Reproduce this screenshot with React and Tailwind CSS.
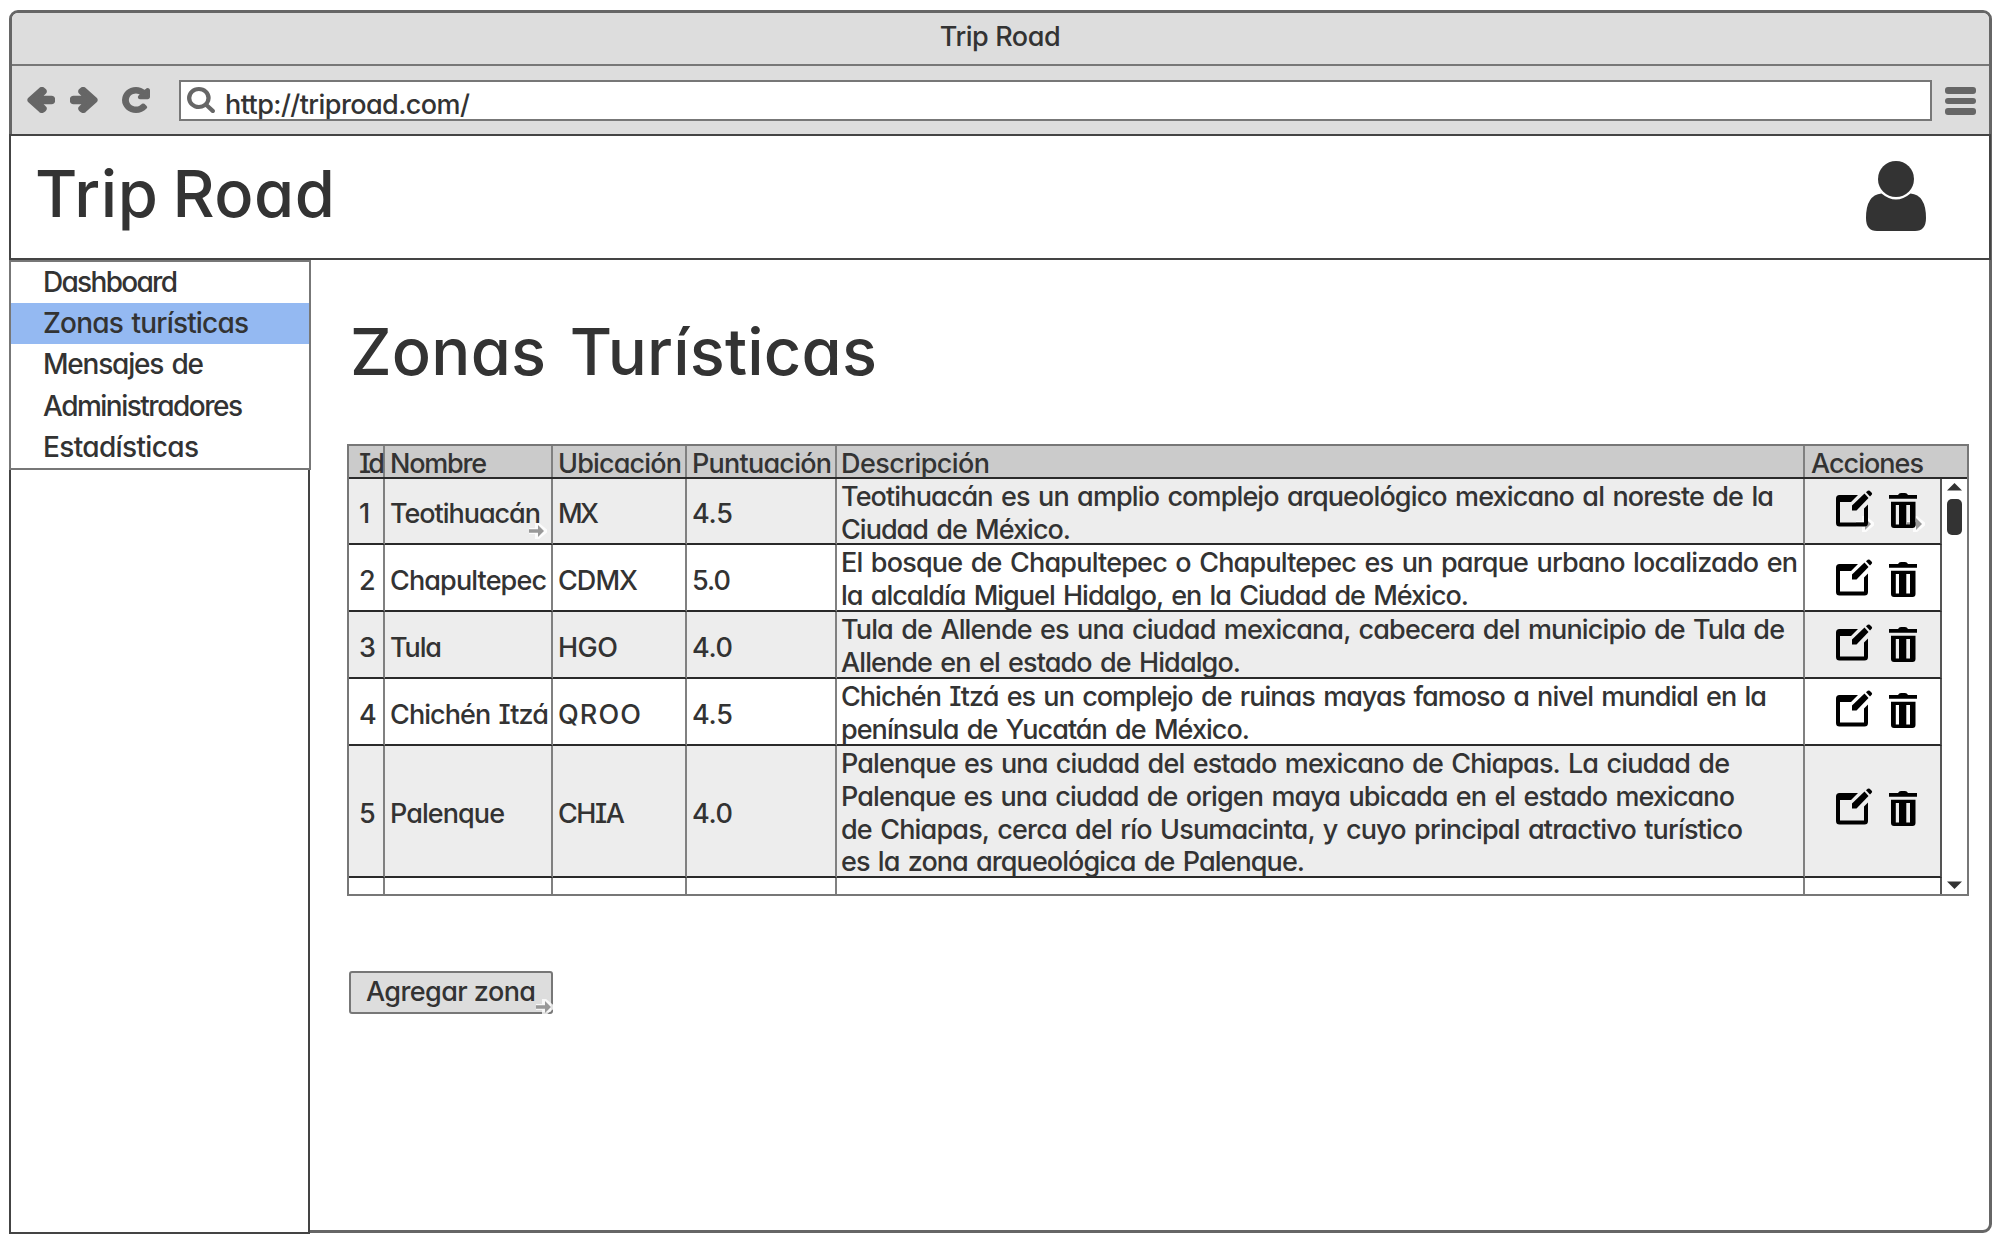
import { useLayoutEffect, useRef } from 'react';

// One line of text whose tracking is adjusted so that it spans `w` pixels.
function Fit({ w, children, className = '' }) {
  const ref = useRef(null);
  useLayoutEffect(() => {
    const el = ref.current;
    el.style.letterSpacing = '0px';
    const natural = el.getBoundingClientRect().width;
    const n = Math.max(1, el.textContent.length - 1);
    el.style.letterSpacing = `${(w + 3 - natural) / n}px`;
  }, [w, children]);
  return (
    <span className={`block whitespace-nowrap -ml-[2px] ${className}`}>
      <span ref={ref} className="inline-block">{children}</span>
    </span>
  );
}

const ARROW =
  'M1664 896v128q0 53-32.5 90.5t-84.5 37.5h-704l293 294q38 36 38 90t-38 90l-75 76q-37 37-90 37-52 0-91-37l-651-652q-37-37-37-90 0-52 37-91l651-650q38-38 91-38 52 0 90 38l75 74q38 38 38 91t-38 91l-293 293h704q52 0 84.5 37.5t32.500 90.5z';

function LinkArrow({ className }) {
  return (
    <svg className={`absolute ${className}`} width="20" height="16" viewBox="0 0 20 16">
      <path d="M2 8h9M11 3l6 5-6 5z" stroke="#fff" strokeOpacity="0.8" strokeWidth="6" fill="#fff" />
      <path d="M2 8h10" stroke="#999" strokeWidth="3.500" />
      <path d="M11 2l6 6-6 6z" fill="#999" />
    </svg>
  );
}

function EditIcon() {
  return (
    <svg width="37" height="39" viewBox="0 0 37 39" className="block">
      <path d="M4 5h18l-7 7h-11v20.500h24v-14l4-4v18.500a3.500 3.500 0 0 1-3.500 3.500h-25a3.500 3.500 0 0 1-3.500-3.500v-24.500a3.500 3.500 0 0 1 3.500-3.500z" />
      <path d="M16 15.500L28.500 3.500l4 4.500L20.500 20.500H16z" />
      <path d="M30 2.300l1.700-1.500q1-.8 2 0l2 2q.9 1 0 2L34 6.600z" />
    </svg>
  );
}

function TrashIcon() {
  return (
    <svg width="28" height="36" viewBox="0 0 28 36" className="block">
      <path d="M0 2h9q1-2 3-2h4q2 0 3 2h9v3.700H0z" />
      <path fillRule="evenodd" d="M2 8.700h24.500v23.300a3 3 0 0 1-3 3h-18.500a3 3 0 0 1-3-3zM6.800 12v19.500h3.200V12zM17.300 12v19.500h3.700V12z" />
    </svg>
  );
}

const MENU = [
  ['Dashboard', 132],
  ['Zonas turísticas', 203],
  ['Mensajes de', 158],
  ['Administradores', 197],
  ['Estadísticas', 153],
];

const ROWS = [
  { id: '1', name: ['Teotihuacán', 148], loc: ['MX', 38], score: ['4.5', 38], h: 'h-[66px]', pad: 'pt-[11px]', link: true,
    desc: [['Teotihuacán es un amplio complejo arqueológico mexicano al noreste de la', 930], ['Ciudad de México.', 227]] },
  { id: '2', name: ['Chapultepec', 154], loc: ['CDMX', 77], score: ['5.0', 36], h: 'h-[67px]', pad: 'pt-[14px]',
    desc: [['El bosque de Chapultepec o Chapultepec es un parque urbano localizado en', 954], ['la alcaldía Miguel Hidalgo, en la Ciudad de México.', 625]] },
  { id: '3', name: ['Tula', 49], loc: ['HGO', 57], score: ['4.0', 38], h: 'h-[67px]', pad: 'pt-[12px]',
    desc: [['Tula de Allende es una ciudad mexicana, cabecera del municipio de Tula de', 941], ['Allende en el estado de Hidalgo.', 397]] },
  { id: '4', name: ['Chichén Itzá', 156], loc: ['QROO', 80], score: ['4.5', 38], h: 'h-[67px]', pad: 'pt-[11px]',
    desc: [['Chichén Itzá es un complejo de ruinas mayas famoso a nivel mundial en la', 923], ['península de Yucatán de México.', 406]] },
  { id: '5', name: ['Palenque', 112], loc: ['CHIA', 64], score: ['4.0', 38], h: 'h-[132px]', pad: 'pt-[42px]',
    desc: [['Palenque es una ciudad del estado mexicano de Chiapas. La ciudad de', 886], ['Palenque es una ciudad de origen maya ubicada en el estado mexicano', 891], ['de Chiapas, cerca del río Usumacinta, y cuyo principal atractivo turístico', 899], ['es la zona arqueológica de Palenque.', 461]] },
];

const CELL = 'border-r-2 border-[#808080] flex items-center shrink-0';
const BODY_CELL = 'border-b-2 border-b-[#2a2a2a] pt-[5px]';

function Row({ r, i }) {
  return (
    <div className={`flex ${r.h} ${i % 2 === 0 ? 'bg-[#ededed]' : 'bg-white'}`}>
      <div className={`${CELL} ${BODY_CELL} w-[36px] pl-[10px]`}>{r.id}</div>
      <div className={`${CELL} ${BODY_CELL} relative w-[168px] pl-[7px]`}>
        <Fit w={r.name[1]}>{r.name[0]}</Fit>
        {r.link && <LinkArrow className="left-[142px] top-[44px]" />}
      </div>
      <div className={`${CELL} ${BODY_CELL} w-[134px] pl-[7px]`}><Fit w={r.loc[1]}>{r.loc[0]}</Fit></div>
      <div className={`${CELL} ${BODY_CELL} w-[150px] pl-[7px]`}><Fit w={r.score[1]}>{r.score[0]}</Fit></div>
      <div className={`${CELL} ${BODY_CELL} w-[968px] pl-[6px]`}>
        <div className="leading-[32.8px]">
          {r.desc.map(([t, w]) => <Fit key={t} w={w}>{t}</Fit>)}
        </div>
      </div>
      <div className={`relative w-[137px] shrink-0 flex items-start border-r-2 border-r-[#555] border-b-2 border-b-[#2a2a2a] pl-[31px] ${r.pad}`}>
        {r.link && <LinkArrow className="left-[49px] top-[37px]" />}
        {r.link && <LinkArrow className="left-[100px] top-[37px]" />}
        <div className="relative"><EditIcon /></div>
        <div className="relative ml-[16px] mt-[3px]"><TrashIcon /></div>
      </div>
    </div>
  );
}

export default function App() {
  return (
    <div className="w-[2004px] h-[1248px] bg-white overflow-hidden pl-[9px] pt-[10px] text-[27px] font-medium text-[#333] font-['Inter',sans-serif] [font-feature-settings:'cv11','cv08'] [word-spacing:2px] leading-[33px]">
      <div className="w-[1983px] h-[1223px] border-[3px] border-[#666] rounded-[9px] flex flex-col">
        <div className="shrink-0 h-[53px] bg-[#ddd] border-b-2 border-[#777] rounded-t-[6px] flex justify-center pl-[1px] pt-[7px] [word-spacing:0px]">
          <Fit w={118}>Trip Road</Fit>
        </div>
        <div className="shrink-0 h-[68px] bg-[#ddd] flex items-start pt-[14px] pl-[15px]">
          <svg className="mt-[7px]" width="28" height="26" viewBox="81 91 1673 1738" preserveAspectRatio="none"><path fill="#666" stroke="#666" strokeWidth="190" strokeLinejoin="round" d={ARROW} /></svg>
          <svg className="mt-[7px] ml-[15px] -scale-x-100" width="28" height="26" viewBox="81 91 1673 1738" preserveAspectRatio="none"><path fill="#666" stroke="#666" strokeWidth="190" strokeLinejoin="round" d={ARROW} /></svg>
          <svg className="mt-[7px] ml-[24px]" width="28" height="26" viewBox="-80 48 1696 1696" preserveAspectRatio="none">
            <path fill="#666" stroke="#666" strokeWidth="160" d="M1536 256v448q0 26-19 45t-45 19h-448q-42 0-59-40-17-39 14-69l138-138q-148-137-349-137-104 0-198.500 40.500t-163.500 109.500-109.500 163.500-40.500 198.500 40.500 198.500 109.500 163.500 163.500 109.500 198.500 40.500q119 0 225-52t179-147q7-10 23-12 14 0 25 9l137 138q9 8 9.500 20.500t-7.500 22.500q-109 132-264 204.500t-327 72.500q-156 0-298-61t-245-164-164-245-61-298 61-298 164-245 245-164 298-61q147 0 284.500 55.500t244.500 156.500l130-129q29-31 70-14 39 17 39 59z" />
          </svg>
          <div className="ml-[29px] w-[1753px] h-[41px] bg-white border-2 border-[#777] flex">
            <svg className="mt-[5px] ml-[6px]" width="28" height="26" viewBox="64 128 1664 1664" preserveAspectRatio="none">
              <path fill="#666" d="M1216 832q0-185-131.500-316.500t-316.500-131.500-316.500 131.500-131.500 316.500 131.500 316.500 316.500 131.500 316.500-131.500 131.500-316.500zm512 832q0 52-38 90t-90 38q-54 0-90-38l-343-342q-179 124-399 124-143 0-273.500-55.500t-225-150-150-225-55.500-273.500 55.500-273.500 150-225 225-150 273.500-55.500 273.500 55.500 225 150 150 225 55.500 273.500q0 220-124 399l343 343q37 37 37 90z" />
            </svg>
            <Fit w={242} className="ml-[10px] mt-[6px]">http://triproad.com/</Fit>
          </div>
          <div className="ml-[13px] mt-[7px] flex flex-col gap-[4px]">
            <div className="w-[31px] h-[6.500px] rounded-[3px] bg-[#666]" />
            <div className="w-[31px] h-[6.500px] rounded-[3px] bg-[#666]" />
            <div className="w-[31px] h-[6.500px] rounded-[3px] bg-[#666]" />
          </div>
        </div>

        <header className="shrink-0 -ml-[3px] w-[1982px] h-[126px] bg-white border-2 border-[#444] flex justify-between items-center pl-[26px] pr-[62px]">
          <div className="text-[65px] leading-[80px] -mt-[6px] [word-spacing:-4px]"><Fit w={297}>Trip Road</Fit></div>
          <svg className="-mt-[2px]" width="62" height="72" viewBox="0 0 62 72" fill="#333">
            <circle cx="31" cy="19" r="18" />
            <path d="M16.500 33.500q14.500 12 29 0Q61 35 61 58q0 13-11 13H12Q1 71 1 58q0-23 15.500-24.500z" />
          </svg>
        </header>

        <div className="flex">
          <aside className="shrink-0 -ml-[3px] w-[301px] h-[974px] bg-white border-2 border-t-0 border-[#444]">
            <nav className="-ml-[2px] w-[302px] h-[210px] bg-white border-2 border-[#777]">
              {MENU.map(([t, w], i) => (
                <div key={t} className={`h-[41.200px] pl-[34px] pt-[4px] text-[28px] ${i === 1 ? 'bg-[#94b9f2]' : ''}`}>
                  <Fit w={w}>{t}</Fit>
                </div>
              ))}
            </nav>
          </aside>

          <main className="pl-[37px] pt-[52px]">
            <h1 className="ml-[5px] text-[65px] leading-[80px] font-medium [word-spacing:6px]"><Fit w={524}>Zonas Turísticas</Fit></h1>

            <section className="mt-[52px] w-[1622px] h-[452px] border-2 border-[#777] bg-white">
              <div className="flex h-[33px] bg-[#cbcbcb] border-b-2 border-[#2a2a2a] leading-[31px]">
                <div className={`${CELL} pt-[4px] w-[36px] pl-[12px]`}><Fit w={23}>Id</Fit></div>
                <div className={`${CELL} pt-[4px] w-[168px] pl-[7px]`}><Fit w={94}>Nombre</Fit></div>
                <div className={`${CELL} pt-[4px] w-[134px] pl-[7px]`}><Fit w={121}>Ubicación</Fit></div>
                <div className={`${CELL} pt-[4px] w-[150px] pl-[7px]`}><Fit w={137}>Puntuación</Fit></div>
                <div className={`${CELL} pt-[4px] w-[968px] pl-[6px]`}><Fit w={146}>Descripción</Fit></div>
                <div className="flex items-center pt-[4px] pl-[8px]"><Fit w={110}>Acciones</Fit></div>
              </div>
              <div className="flex">
                <div className="w-[1593px]">
                  {ROWS.map((r, i) => <Row key={r.id} r={r} i={i} />)}
                  <div className="flex h-[16px]">
                    <div className={`${CELL} w-[36px]`} />
                    <div className={`${CELL} w-[168px]`} />
                    <div className={`${CELL} w-[134px]`} />
                    <div className={`${CELL} w-[150px]`} />
                    <div className={`${CELL} w-[968px]`} />
                    <div className="w-[137px] border-r-2 border-[#555]" />
                  </div>
                </div>
                <div className="w-[25px] flex flex-col items-center justify-between pt-[4px] pb-[5px]">
                  <div className="flex flex-col items-center">
                    <svg width="15" height="8" viewBox="0 0 15 8"><path d="M0 7.500L7.500 0 15 7.500z" fill="#333" /></svg>
                    <div className="mt-[8px] w-[15px] h-[36px] rounded-[5px] bg-[#333]" />
                  </div>
                  <svg width="15" height="8" viewBox="0 0 15 8"><path d="M0 0.500L7.500 8 15 0.500z" fill="#333" /></svg>
                </div>
              </div>
            </section>

            <button className="relative ml-[2px] mt-[75px] w-[204px] h-[43px] flex pl-[17px] pt-[2px] bg-[#ddd] border-2 border-[#777] rounded-[3px]">
              <Fit w={167}>Agregar zona</Fit>
              <LinkArrow className="left-[183px] top-[26px]" />
            </button>
          </main>
        </div>
      </div>
    </div>
  );
}
